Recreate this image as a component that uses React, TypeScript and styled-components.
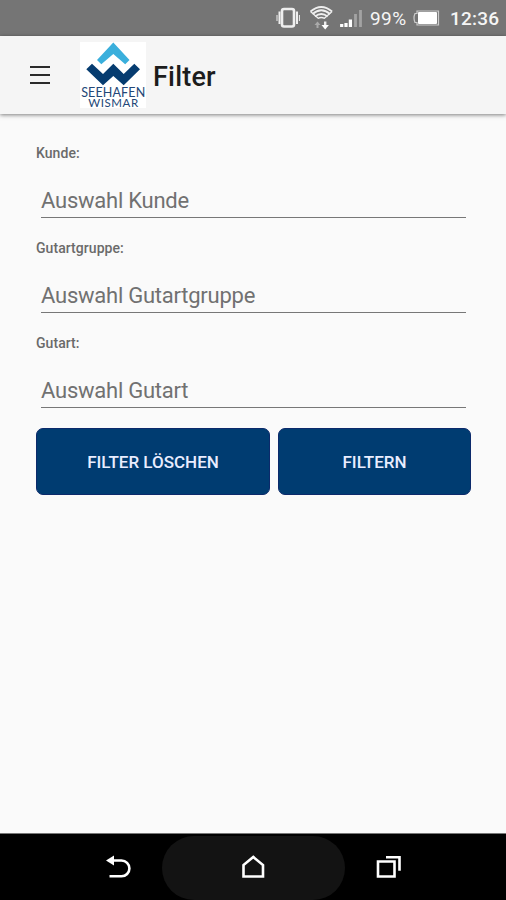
import React from "react";
import styled, { createGlobalStyle } from "styled-components";

const GlobalStyle = createGlobalStyle`
  * { box-sizing: border-box; }
  body { margin: 0; background: #fafafa; font-family: Roboto, sans-serif; }
`;

const Screen = styled.div`
  width: 506px;
  height: 900px;
  display: flex;
  flex-direction: column;
  background: #fafafa;
  overflow: hidden;
`;

const StatusBar = styled.div`
  height: 36px;
  flex: none;
  display: flex;
  align-items: center;
  background: #757575;
  color: #f5f5f5;
  padding-left: 276px;
`;

const StatusIcons = styled.svg`
  width: 94px;
  height: 36px;
  flex: none;
`;

const StatusText = styled.span<{ $width: number; $weight: number; $spacing: number }>`
  width: ${(p) => p.$width}px;
  flex: none;
  margin-top: 2px;
  font-size: 19px;
  line-height: 24px;
  font-weight: ${(p) => p.$weight};
  letter-spacing: ${(p) => p.$spacing}px;
  white-space: nowrap;
`;

const BatteryIcon = styled.svg`
  width: 30px;
  height: 36px;
  margin-right: 7px;
  flex: none;
`;

const Header = styled.header`
  height: 78px;
  flex: none;
  display: flex;
  align-items: center;
  background: #f5f5f5;
  box-shadow: 0 1px 4px rgba(0, 0, 0, 0.5);
  padding-left: 30px;
`;

const MenuButton = styled.button`
  display: flex;
  flex-direction: column;
  gap: 6px;
  width: 20px;
  margin: 0 30px 0 0;
  padding: 0;
  border: 0;
  background: none;
`;

const MenuLine = styled.span`
  height: 2px;
  background: #2b2b2b;
`;

const Logo = styled.svg`
  width: 66px;
  height: 66px;
  flex: none;
  background: #fff;
  overflow: visible;
`;

const Title = styled.h1`
  margin: 4px 0 0 7px;
  font-size: 27px;
  line-height: 34px;
  font-weight: 500;
  color: #1c1c1c;
  letter-spacing: 0.2px;
`;

const Form = styled.main`
  flex: 1;
  display: flex;
  flex-direction: column;
  padding: 29px 35px 0 36px;
`;

const Field = styled.label`
  height: 95px;
  display: flex;
  flex-direction: column;
`;

const FieldLabel = styled.span`
  font-size: 14px;
  line-height: 20px;
  font-weight: 500;
  color: #6a6a6a;
  letter-spacing: 0.06px;
`;

const FieldValue = styled.span`
  height: 34px;
  margin: 21px 5px 0;
  border-bottom: 1px solid #777;
  font-size: 22px;
  line-height: 33px;
  color: #717171;
  letter-spacing: -0.24px;
`;

const Actions = styled.div`
  display: grid;
  grid-template-columns: 234px 193px;
  column-gap: 8px;
`;

const ActionButton = styled.button`
  height: 67px;
  padding: 0;
  border: 1px solid #0c2a6b;
  border-radius: 7px;
  background: #003c71;
  color: #e9edff;
  font: 500 17px/24px Roboto, sans-serif;
`;

const NavBar = styled.nav`
  height: 67px;
  flex: none;
  display: flex;
  justify-content: center;
  border-top: 1px solid #777;
  background: #000;
`;

const NavItem = styled.button<{ $active?: boolean }>`
  width: ${(p) => (p.$active ? 183 : 90)}px;
  height: 64px;
  margin-top: 2px;
  padding: 0 0 2px;
  border: 0;
  border-radius: 32px;
  background: ${(p) => (p.$active ? "#131313" : "transparent")};
  display: flex;
  align-items: center;
  justify-content: center;
`;

const NavIcon = styled.svg`
  width: 28px;
  height: 28px;
  fill: none;
  stroke: #fff;
  stroke-width: 2.6;
`;

const fields = [
  { label: "Kunde:", value: "Auswahl Kunde" },
  { label: "Gutartgruppe:", value: "Auswahl Gutartgruppe" },
  { label: "Gutart:", value: "Auswahl Gutart" },
];

export default function App() {
  return (
    <>
      <GlobalStyle />
      <Screen>
        <StatusBar>
          <StatusIcons viewBox="276 0 94 36" fill="none" stroke="#eee">
            <rect x="282" y="9" width="12" height="17.5" rx="2" strokeWidth="2.6" />
            <path d="M279.5 11.5v12.5M297 11.5v12.5" strokeWidth="2" />
            <path d="M277 15v6M299.4 15v6" strokeWidth="1" />
            <path d="M310.5 11.5q10.8-9 21.6 0M312.5 14q8.8-7.5 17.6 0M315 16.5q6.3-5 12.6 0" strokeWidth="1.7" />
            <path d="M310.5 11.5l8 7M332.1 11.5l-8 7M318 18.5q3.3-2 6.6 0" strokeWidth="1.3" />
            <path d="M317.5 28v-4" stroke="#aaa" strokeWidth="2" />
            <path d="M314.5 25l3-3.5 3 3.5z" fill="#aaa" stroke="none" />
            <path d="M325.2 21.5v5" strokeWidth="2.4" />
            <path d="M321.5 25h7.4l-3.7 4.5z" fill="#fff" stroke="none" />
            <path d="M341.7 27v-3M346 27v-4M350.4 27v-7.5" strokeWidth="3.2" stroke="#fff" />
            <path d="M355.5 27V14M360.5 27V10" strokeWidth="2.8" stroke="#a3a3a3" />
          </StatusIcons>
          <StatusText $width={43} $weight={400} $spacing={0.4}>
            99%
          </StatusText>
          <BatteryIcon viewBox="413 0 30 36">
            <path d="M417 11h21.5v14H417v-2.5h-2q-2-4.5 0-9h2z" fill="none" stroke="#ccc" strokeWidth="1.2" />
            <rect x="418" y="12" width="19" height="12" rx="1" fill="#fff" />
          </BatteryIcon>
          <StatusText $width={56} $weight={500} $spacing={0.2}>
            12:36
          </StatusText>
        </StatusBar>

        <Header>
          <MenuButton aria-label="Menu">
            <MenuLine />
            <MenuLine />
            <MenuLine />
          </MenuButton>
          <Logo viewBox="80 42 66 66">
            <path d="M113.3 42.5L129.5 60l-4.3 4.3L113.3 54l-12 10.3L97 60z" fill="#3aafdc" />
            <path
              d="M86.3 69.3l5.7-5.6 11 10.2 10.3-10.2 10.4 10.2 10.6-10.2 5.7 5.6-16.3 16-10.4-9.4-10.3 9.4z"
              fill="#063c70"
            />
            <g fill="#234777" fontFamily="Lato, sans-serif" textAnchor="middle">
              <text x="113.2" y="96.5" fontSize="12.5" textLength="64" lengthAdjust="spacing">SEEHAFEN</text>
              <text x="113.2" y="107.3" fontSize="11.5" textLength="50" lengthAdjust="spacing">WISMAR</text>
            </g>
          </Logo>
          <Title>Filter</Title>
        </Header>

        <Form>
          {fields.map((f) => (
            <Field key={f.label}>
              <FieldLabel>{f.label}</FieldLabel>
              <FieldValue>{f.value}</FieldValue>
            </Field>
          ))}
          <Actions>
            <ActionButton>FILTER LÖSCHEN</ActionButton>
            <ActionButton>FILTERN</ActionButton>
          </Actions>
        </Form>

        <NavBar>
          <NavItem aria-label="Back">
            <NavIcon viewBox="0 0 28 28">
              <path d="M9 7.5h9.5a7.9 7.9 0 0 1 0 15.8H6.5" />
              <path d="M3 7.5L11 2.5v10z" fill="#fff" stroke="none" />
            </NavIcon>
          </NavItem>
          <NavItem $active aria-label="Home">
            <NavIcon viewBox="0 0 28 28">
              <path d="M4.5 23.5V12L14.3 4l9.7 8v11.5z" />
            </NavIcon>
          </NavItem>
          <NavItem aria-label="Recent apps">
            <NavIcon viewBox="0 0 28 28">
              <path d="M2 8.5h16.5v15H2zM10 4.2h13.5v13.5" />
            </NavIcon>
          </NavItem>
        </NavBar>
      </Screen>
    </>
  );
}
